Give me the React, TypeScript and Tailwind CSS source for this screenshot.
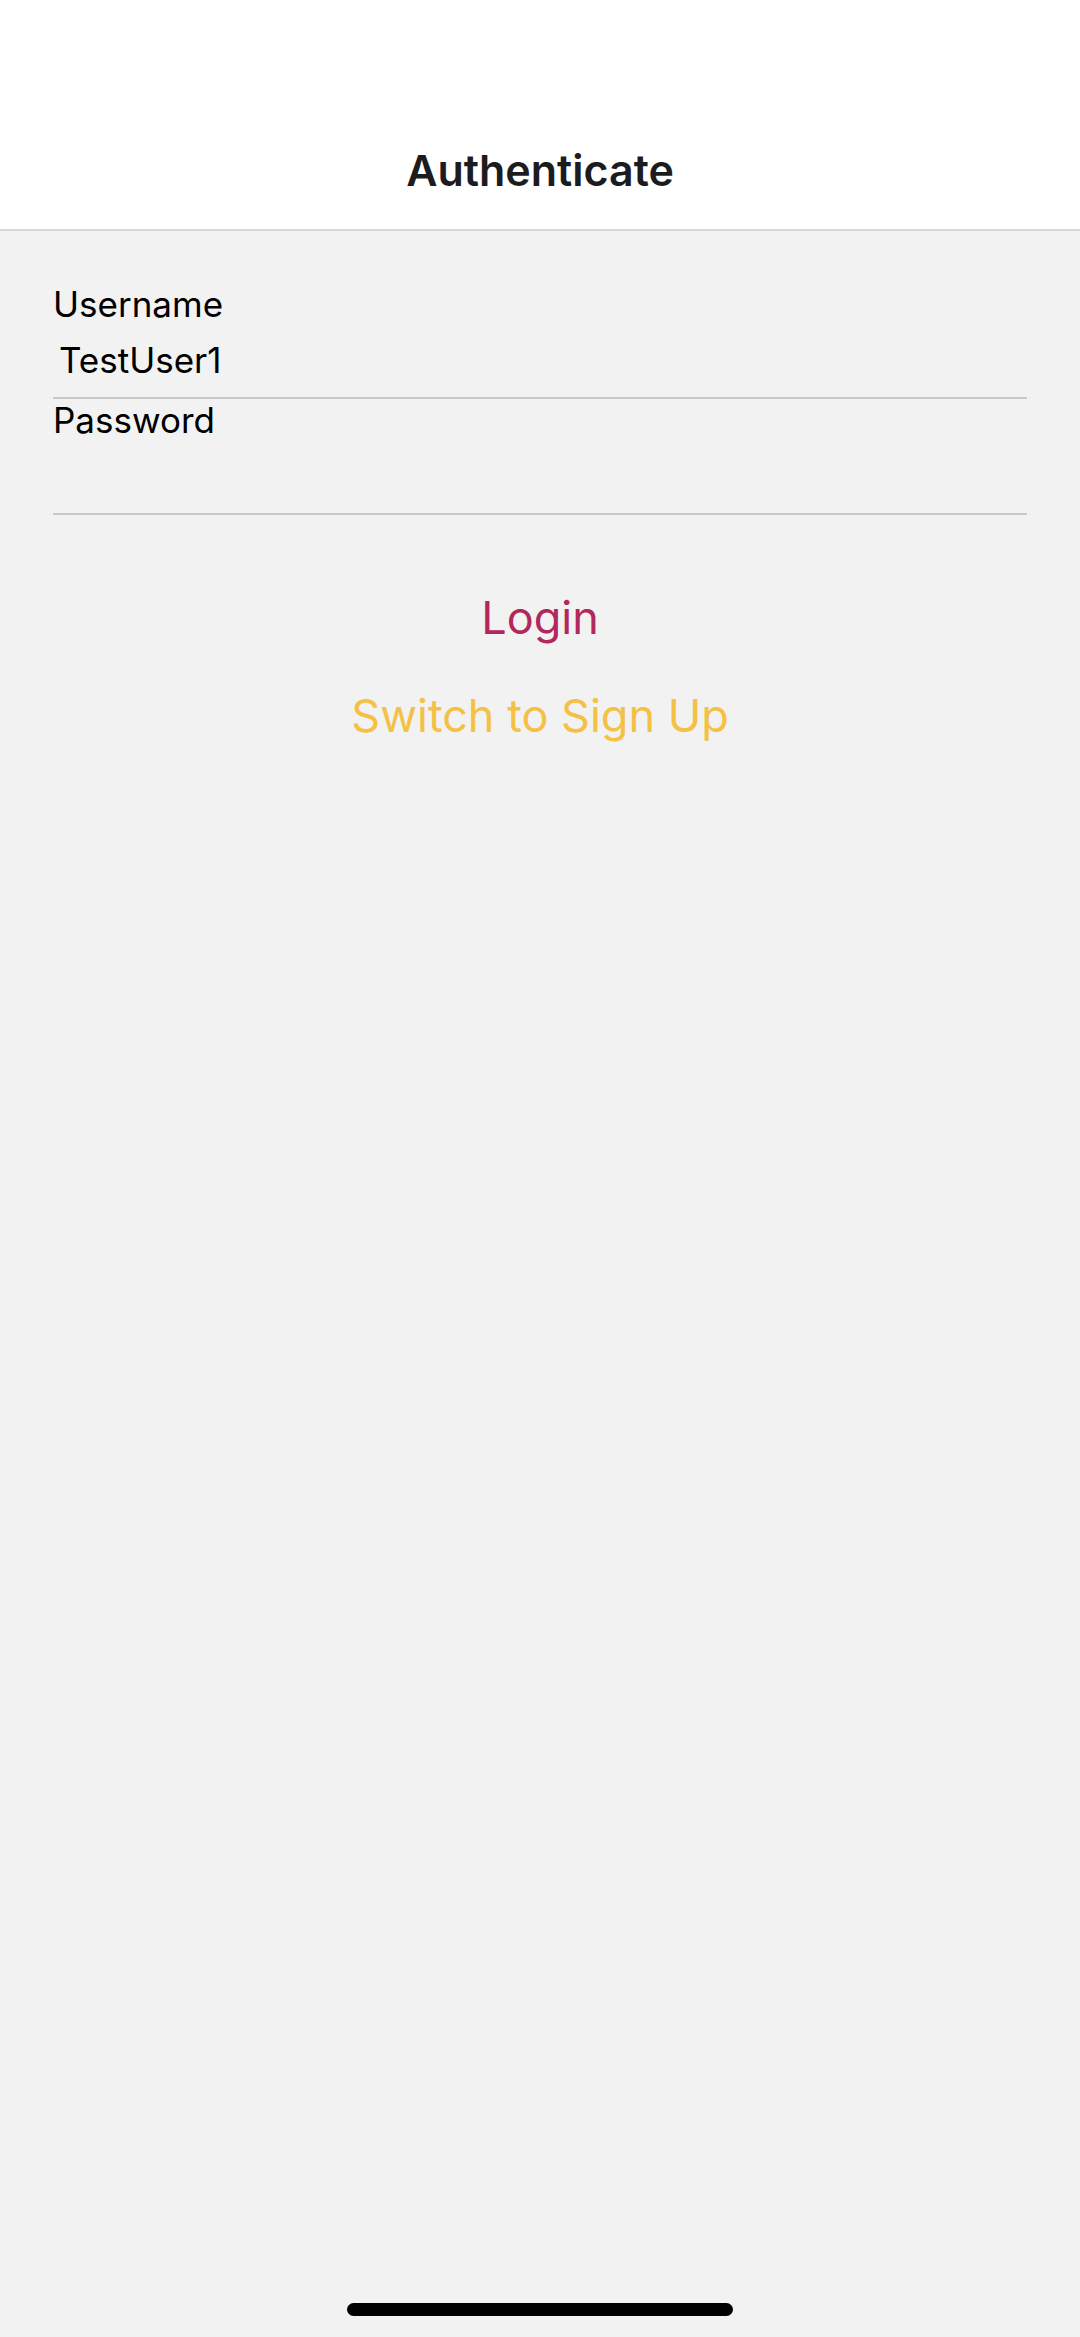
import React from 'react';

const font = { fontFamily: 'Inter, "Noto Sans", sans-serif' };

const Field: React.FC<{ label: string; value?: string; secure?: boolean }> = ({ label, value, secure }) => {
  return (
    <div className="flex flex-col">
      <label className="text-[35px] leading-[42px] text-black">{label}</label>
      <input
        type={secure ? 'password' : 'text'}
        defaultValue={value}
        className="bg-transparent outline-none text-[35px] leading-[42px] h-[74px] pt-[15px] pb-[17px] pl-[6px] text-black border-b-2 border-[#c8c8c8]"
      />
    </div>
  );
};

export default function App() {
  return (
    <div className="w-[1080px] h-[2337px] flex flex-col bg-[#f2f2f2]" style={font}>
      {/* Header */}
      <header className="h-[231px] bg-white border-b-2 border-[#d6d6d6] flex justify-center pt-[142px]">
        <h1 className="text-[43px] leading-[56px] font-semibold text-[#1c1c1e]">Authenticate</h1>
      </header>

      {/* Form */}
      <main className="flex-1 flex flex-col px-[53px] pt-[52px]">
        <Field label="Username" value="TestUser1" />
        <Field label="Password" secure />

        <div className="flex flex-col items-center mt-[75px] gap-[42px]">
          <button className="text-[45px] leading-[56px] text-[#b3285c]">Login</button>
          <button className="text-[45px] leading-[56px] text-[#f4c145]">Switch to Sign Up</button>
        </div>
      </main>

      {/* Home indicator */}
      <div className="flex justify-center pb-[21px]">
        <div className="w-[386px] h-[13px] rounded-full bg-black" />
      </div>
    </div>
  );
}
